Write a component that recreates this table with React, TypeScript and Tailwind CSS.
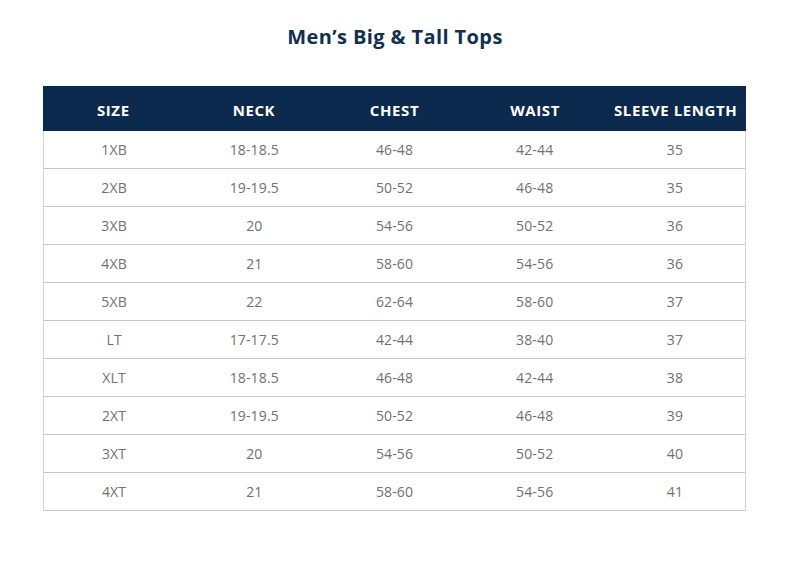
const headers = ['SIZE', 'NECK', 'CHEST', 'WAIST', 'SLEEVE LENGTH'];

const rows: string[][] = [
  ['1XB', '18-18.5', '46-48', '42-44', '35'],
  ['2XB', '19-19.5', '50-52', '46-48', '35'],
  ['3XB', '20', '54-56', '50-52', '36'],
  ['4XB', '21', '58-60', '54-56', '36'],
  ['5XB', '22', '62-64', '58-60', '37'],
  ['LT', '17-17.5', '42-44', '38-40', '37'],
  ['XLT', '18-18.5', '46-48', '42-44', '38'],
  ['2XT', '19-19.5', '50-52', '46-48', '39'],
  ['3XT', '20', '54-56', '50-52', '40'],
  ['4XT', '21', '58-60', '54-56', '41'],
];

export default function App() {
  return (
    <div className="w-[790px] h-[567px] bg-white font-['Open_Sans',sans-serif]">
      <h1 className="pt-[23px] text-center text-[20px] tracking-[0.02em] font-bold text-[#12304f] leading-[28px]">
        Men’s Big &amp; Tall Tops
      </h1>
      <div className="ml-[43px] mt-[35px] w-[703px]">
        <div className="grid grid-cols-5 h-[45px] items-center pt-[3px] bg-[#0c2a4d] text-white text-[15px] tracking-[0.04em] font-bold">
          {headers.map((h) => (
            <div key={h} className="text-center">{h}</div>
          ))}
        </div>
        <div className="border-l border-r border-[#d4d4d4]">
          {rows.map((r) => (
            <div key={r[0]} className="grid grid-cols-5 h-[38px] items-center border-b border-[#c8c8c8] text-[14px] tracking-[0.01em] text-[#707070]">
              {r.map((c, i) => (
                <div key={i} className="text-center">{c}</div>
              ))}
            </div>
          ))}
        </div>
      </div>
    </div>
  );
}
